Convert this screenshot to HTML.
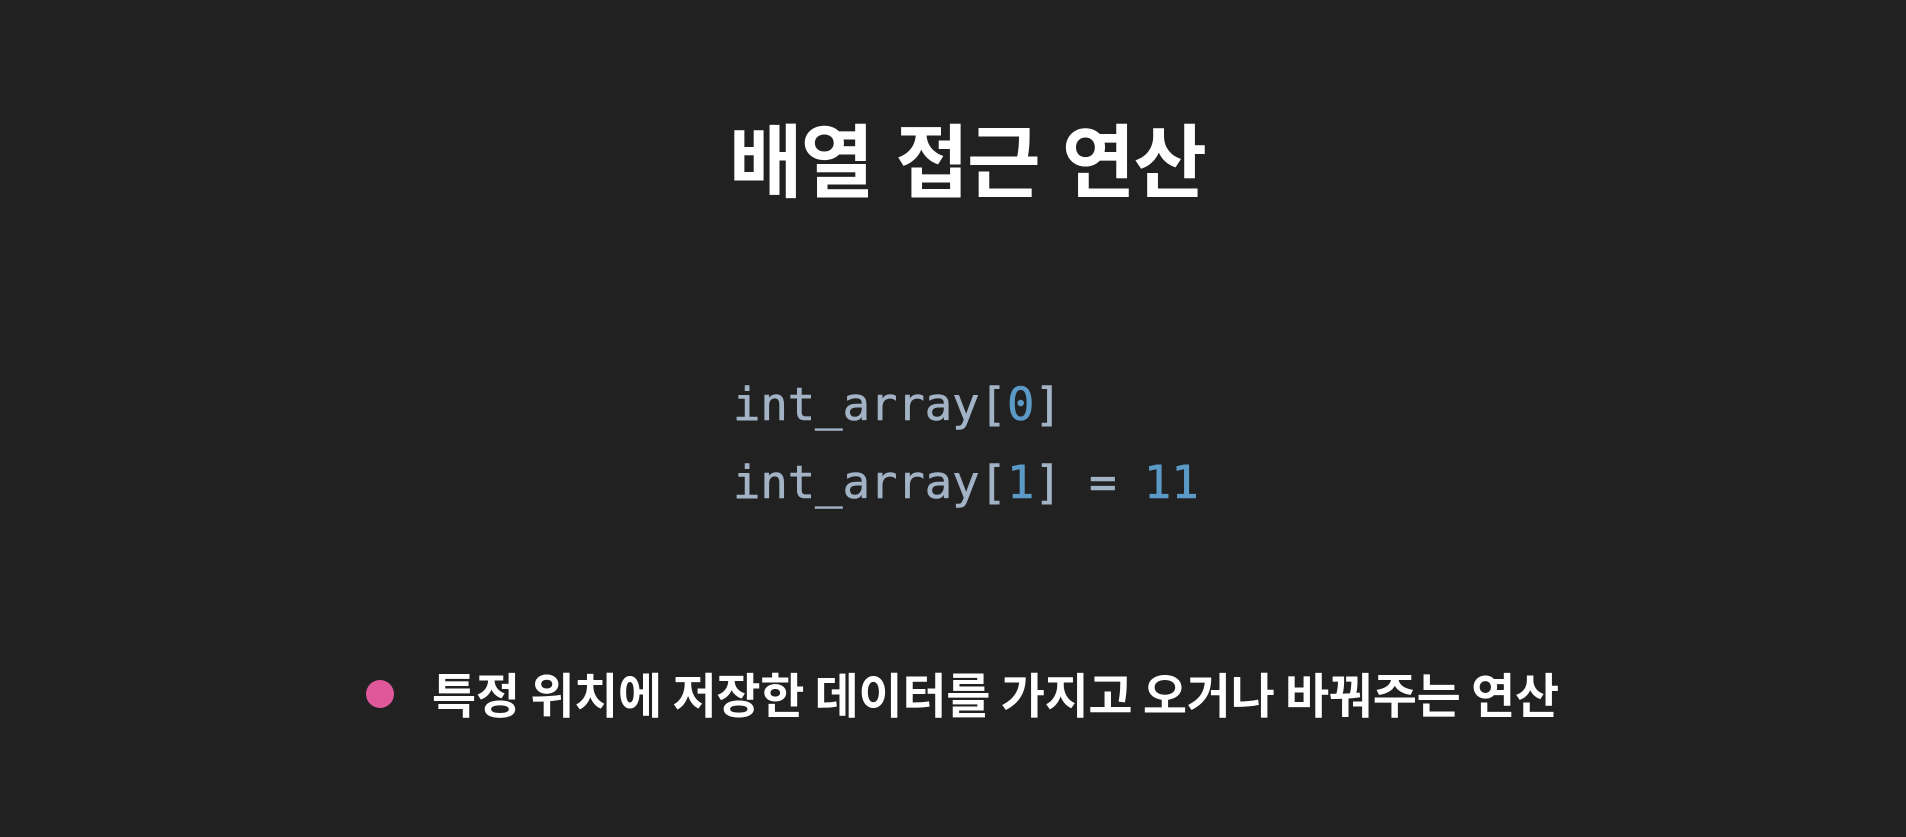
<!DOCTYPE html>
<html><head><meta charset="utf-8"><style>
html,body{margin:0;padding:0;background:#212121;width:1906px;height:837px;overflow:hidden;position:relative}
.t{position:absolute;left:729px;top:101px;font:700 80px "Noto Sans CJK KR",sans-serif;color:#fff;letter-spacing:-2px;word-spacing:7px;white-space:pre;line-height:1.4}
.code{position:absolute;left:733px;top:366px;font:45.5px/78px "DejaVu Sans Mono","Liberation Mono",monospace;color:#a3b3c6;white-space:pre;-webkit-text-stroke:0.6px currentColor}
.n{color:#5b9ac6}
.dot{position:absolute;left:366px;top:680px;width:28px;height:28px;border-radius:50%;background:#e0589a}
.b{position:absolute;left:432px;top:659px;font:700 48px "Noto Sans CJK KR",sans-serif;color:#fff;white-space:pre;line-height:1.4;letter-spacing:-0.3px}
</style></head><body>
<div class="t">배열 접근 연산</div>
<div class="code">int_array[<span class="n">0</span>]
int_array[<span class="n">1</span>] = <span class="n">11</span></div>
<div class="dot"></div>
<div class="b">특정 위치에 저장한 데이터를 가지고 오거나 바꿔주는 연산</div>
</body></html>
